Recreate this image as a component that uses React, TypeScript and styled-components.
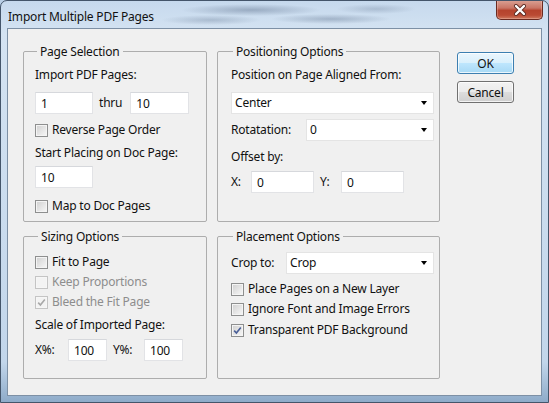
import React from 'react';
import styled, { createGlobalStyle } from 'styled-components';

const GlobalStyle = createGlobalStyle`
  * { box-sizing: border-box; }
  html, body {
    margin: 0;
    padding: 0;
    background: #b9cfe6;
  }
  body {
    font-family: "Noto Sans", "Open Sans", "Liberation Sans", sans-serif;
    font-size: 12px;
    letter-spacing: -0.2px;
    color: #111;
  }
`;

const Window = styled.div`
  width: 549px;
  height: 403px;
  display: flex;
  flex-direction: column;
  border: 1px solid #44556a;
  border-radius: 7px 7px 0 0;
  overflow: hidden;
  background:
    radial-gradient(ellipse 70px 6px at 250px 9px, rgba(60, 80, 110, 0.35), transparent),
    radial-gradient(ellipse 60px 5px at 330px 18px, rgba(60, 80, 110, 0.3), transparent),
    radial-gradient(ellipse 50px 5px at 210px 19px, rgba(60, 80, 110, 0.25), transparent),
    radial-gradient(ellipse 40px 5px at 375px 8px, rgba(60, 80, 110, 0.22), transparent),
    linear-gradient(180deg, #c6d9ed 0%, #d4e3f2 8%, #c2d6eb 90%, #8eabc9 100%);
`;

const TitleBar = styled.div`
  height: 27px;
  flex-shrink: 0;
  display: flex;
  justify-content: space-between;
  align-items: flex-start;
  padding-left: 7px;
`;

const Title = styled.div`
  margin-top: 8px;
  line-height: 16px;
`;

const CloseButton = styled.div`
  width: 47px;
  height: 20px;
  margin-top: -1px;
  margin-right: 5px;
  display: flex;
  align-items: center;
  justify-content: center;
  border: 1px solid #6a2a20;
  border-top: none;
  border-radius: 0 0 5px 5px;
  background: linear-gradient(180deg, #dba396 0%, #c97565 42%, #b5432d 55%, #ba4a33 80%, #cf7a60 100%);
  box-shadow: inset 0 0 0 1px rgba(255, 220, 210, 0.3);
`;

const Client = styled.div`
  flex: 1;
  margin: 0 6px 6px 6px;
  border: 1px solid #7d90a5;
  background: #f0f0f0;
  padding: 22px 0 0 15px;
  display: grid;
  grid-template-columns: 184px 223px 57px;
  grid-template-rows: 171px 143px;
  column-gap: 10px;
  row-gap: 14px;
  align-content: start;
`;

const Group = styled.div`
  position: relative;
  border: 1px solid #adadad;
  border-radius: 2px;
`;

const Legend = styled.span<{ $left: number }>`
  position: absolute;
  top: -8px;
  left: ${({ $left }) => $left}px;
  padding: 0 3px;
  line-height: 16px;
  background: #f0f0f0;
`;

const Stack = styled.div<{ $pt: number; $pl: number }>`
  display: flex;
  flex-direction: column;
  padding-top: ${({ $pt }) => $pt}px;
  padding-left: ${({ $pl }) => $pl}px;
`;

const Row = styled.div<{ $mt?: number; $h?: number }>`
  display: flex;
  align-items: center;
  margin-top: ${({ $mt }) => $mt ?? 0}px;
  height: ${({ $h }) => $h ?? 16}px;
  line-height: 16px;
  white-space: nowrap;
`;

const Label = styled.span<{ $w?: number; $ml?: number; $mr?: number; $disabled?: boolean }>`
  display: inline-block;
  width: ${({ $w }) => ($w ? `${$w}px` : 'auto')};
  margin-left: ${({ $ml }) => $ml ?? 0}px;
  margin-right: ${({ $mr }) => $mr ?? 0}px;
  color: ${({ $disabled }) => ($disabled ? '#8d8d8d' : 'inherit')};
`;

const TextBox = styled.input<{ $w: number }>`
  width: ${({ $w }) => $w}px;
  height: 22px;
  padding: 0 0 0 5px;
  margin: 0;
  font: inherit;
  letter-spacing: inherit;
  color: inherit;
  background: #fff;
  border: 1px solid #e2e3e6;
  border-top-color: #d6d8dc;
  outline: none;
`;

const Combo = styled.div<{ $w: number }>`
  width: ${({ $w }) => $w}px;
  height: 22px;
  display: flex;
  align-items: center;
  justify-content: space-between;
  padding: 0 6px 0 3px;
  background: #fff;
  border: 1px solid #e4e4e4;
`;

const Arrow = styled.span`
  width: 0;
  height: 0;
  border-left: 3.5px solid transparent;
  border-right: 3.5px solid transparent;
  border-top: 4px solid #000;
`;

const Box = styled.span<{ $disabled?: boolean }>`
  width: 13px;
  height: 13px;
  flex-shrink: 0;
  display: flex;
  align-items: center;
  justify-content: center;
  border: 1px solid ${({ $disabled }) => ($disabled ? '#c4c4c4' : '#8e8f8f')};
  box-shadow: inset 0 0 0 1px ${({ $disabled }) => ($disabled ? '#f6f6f6' : '#f4f4f4')};
  background: ${({ $disabled }) =>
    $disabled ? '#f3f3f3' : 'linear-gradient(135deg, #cfcfcf 0%, #e6e6e6 55%, #f8f8f8 100%)'};
  margin-right: 4px;
`;

const ButtonColumn = styled.div`
  grid-column: 3;
  grid-row: 1 / span 2;
  display: flex;
  flex-direction: column;
  gap: 7px;
  padding-top: 1px;
  margin-left: 7px;
`;

const DialogButton = styled.div<{ $default?: boolean }>`
  width: 57px;
  height: 22px;
  display: flex;
  align-items: center;
  justify-content: center;
  border-radius: 3px;
  border: 1px solid ${({ $default }) => ($default ? '#3c7fb1' : '#707070')};
  box-shadow: inset 0 0 0 1px rgba(255, 255, 255, 0.75);
  background: ${({ $default }) =>
    $default
      ? 'linear-gradient(180deg, #eaf6fd 0%, #d9f0fc 50%, #bee6fd 51%, #a7d9f5 100%)'
      : 'linear-gradient(180deg, #f2f2f2 0%, #ebebeb 50%, #dddddd 51%, #cfcfcf 100%)'};
`;

const Check = ({
  label,
  checked,
  disabled,
  mt,
}: {
  label: string;
  checked?: boolean;
  disabled?: boolean;
  mt: number;
}) => (
  <Row $mt={mt}>
    <Box $disabled={disabled}>
      {checked && (
        <svg width="9" height="9" viewBox="0 0 9 9">
          <path
            d="M1.2 4.6 L3.4 7 L7.8 1.4"
            fill="none"
            stroke={disabled ? '#a8a8a8' : '#4a5f98'}
            strokeWidth="1.6"
          />
        </svg>
      )}
    </Box>
    <Label $disabled={disabled}>{label}</Label>
  </Row>
);

const Select = ({ value, w }: { value: string; w: number }) => (
  <Combo $w={w}>
    <span>{value}</span>
    <Arrow />
  </Combo>
);

export default function App() {
  return (
    <>
      <GlobalStyle />
      <Window>
        <TitleBar>
          <Title>Import Multiple PDF Pages</Title>
          <CloseButton>
            <svg width="14" height="12" viewBox="0 0 14 12">
              <path d="M3 2 L11 10 M11 2 L3 10" stroke="#5a2a22" strokeWidth="4" strokeLinecap="round" />
              <path d="M3 2 L11 10 M11 2 L3 10" stroke="#fff" strokeWidth="2.4" strokeLinecap="round" />
            </svg>
          </CloseButton>
        </TitleBar>

        <Client>
          <Group>
            <Legend $left={13}>Page Selection</Legend>
            <Stack $pt={15} $pl={11}>
              <Row>
                <Label>Import PDF Pages:</Label>
              </Row>
              <Row $mt={9} $h={22}>
                <TextBox $w={58} defaultValue="1" />
                <Label $ml={6} $mr={8}>thru</Label>
                <TextBox $w={59} defaultValue="10" />
              </Row>
              <Check mt={8} label="Reverse Page Order" />
              <Row $mt={7}>
                <Label>Start Placing on Doc Page:</Label>
              </Row>
              <Row $mt={5} $h={22}>
                <TextBox $w={58} defaultValue="10" />
              </Row>
              <Check mt={10} label="Map to Doc Pages" />
            </Stack>
          </Group>

          <Group>
            <Legend $left={15}>Positioning Options</Legend>
            <Stack $pt={15} $pl={13}>
              <Row>
                <Label>Position on Page Aligned From:</Label>
              </Row>
              <Row $mt={9} $h={22}>
                <Select value="Center" w={203} />
              </Row>
              <Row $mt={5} $h={22}>
                <Label $w={75}>Rotatation:</Label>
                <Select value="0" w={128} />
              </Row>
              <Row $mt={8}>
                <Label>Offset by:</Label>
              </Row>
              <Row $mt={6} $h={22}>
                <Label $w={20}>X:</Label>
                <TextBox $w={63} defaultValue="0" />
                <Label $w={21} $ml={6}>Y:</Label>
                <TextBox $w={63} defaultValue="0" />
              </Row>
            </Stack>
          </Group>

          <ButtonColumn>
            <DialogButton $default>OK</DialogButton>
            <DialogButton>Cancel</DialogButton>
          </ButtonColumn>

          <Group>
            <Legend $left={14}>Sizing Options</Legend>
            <Stack $pt={17} $pl={11}>
              <Check mt={0} label="Fit to Page" />
              <Check mt={4} label="Keep Proportions" disabled />
              <Check mt={4} label="Bleed the Fit Page" disabled checked />
              <Row $mt={7}>
                <Label>Scale of Imported Page:</Label>
              </Row>
              <Row $mt={6} $h={22}>
                <Label $w={33}>X%:</Label>
                <TextBox $w={39} defaultValue="100" />
                <Label $w={31} $ml={6}>Y%:</Label>
                <TextBox $w={39} defaultValue="100" />
              </Row>
            </Stack>
          </Group>

          <Group>
            <Legend $left={15}>Placement Options</Legend>
            <Stack $pt={15} $pl={13}>
              <Row $h={22}>
                <Label $w={55}>Crop to:</Label>
                <Select value="Crop" w={148} />
              </Row>
              <Check mt={7} label="Place Pages on a New Layer" />
              <Check mt={4} label="Ignore Font and Image Errors" />
              <Check mt={5} label="Transparent PDF Background" checked />
            </Stack>
          </Group>
        </Client>
      </Window>
    </>
  );
}
